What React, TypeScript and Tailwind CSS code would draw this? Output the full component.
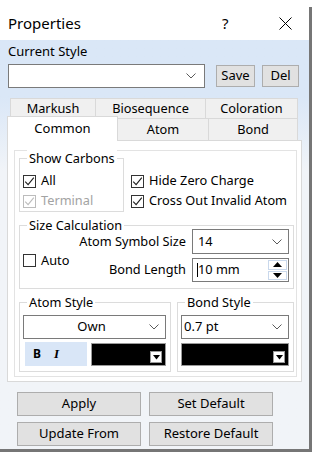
import React from 'react';

const Chevron: React.FC = () => (
  <svg width="10" height="6" viewBox="0 0 10 6">
    <path d="M0.5 0.5 L5 5 L9.5 0.5" fill="none" stroke="#5a5a5a" strokeWidth="1" />
  </svg>
);

const Check: React.FC<{ checked?: boolean; disabled?: boolean }> = ({ checked, disabled }) => (
  <span
    className={`w-[13px] h-[13px] shrink-0 border bg-white flex items-center justify-center ${
      disabled ? 'border-[#bcbcbc]' : 'border-[#333333]'
    }`}
  >
    {checked && (
      <svg width="11" height="11" viewBox="0 0 11 11">
        <path
          d="M1.2 5.6 L4.1 8.6 L9.8 1.6"
          fill="none"
          stroke={disabled ? '#bcbcbc' : '#1e1e1e'}
          strokeWidth="1.1"
        />
      </svg>
    )}
  </span>
);

const CheckRow: React.FC<{ label: string; checked?: boolean; disabled?: boolean }> = ({
  label,
  checked,
  disabled,
}) => (
  <div className="h-[20px] flex items-center gap-[5px]">
    <Check checked={checked} disabled={disabled} />
    <span className={disabled ? 'text-[#a3a3a3]' : 'text-black'}>{label}</span>
  </div>
);

const GroupBox: React.FC<{ title: string; className?: string; children?: React.ReactNode }> = ({
  title,
  className,
  children,
}) => (
  <div className={`relative border border-[#dcdcdc] ${className ?? ''}`}>
    <span className="absolute -top-[9px] left-[7px] bg-white px-[2px] leading-[16px]">{title}</span>
    {children}
  </div>
);

const ColorCombo: React.FC<{ className?: string }> = ({ className }) => (
  <div className={`border border-[#9a9a9a] bg-black flex items-end justify-end pr-[3px] pb-[2px] ${className ?? ''}`}>
    <div className="w-[12px] h-[12px] bg-white border border-[#9a9a9a] flex items-center justify-center">
      <svg width="7" height="5" viewBox="0 0 7 5">
        <path d="M0 0 H7 L3.5 4.5 Z" fill="#000" />
      </svg>
    </div>
  </div>
);

const Button: React.FC<{ label: string; className?: string }> = ({ label, className }) => (
  <div
    className={`bg-[#e1e1e1] border border-[#adadad] flex items-center justify-center text-black ${className ?? ''}`}
  >
    {label}
  </div>
);

const Tab: React.FC<{ label: string; className?: string }> = ({ label, className }) => (
  <div className={`bg-[#f0f0f0] border-[#d9d9d9] flex items-center justify-center ${className ?? ''}`}>
    {label}
  </div>
);

export default function App() {
  return (
    <div className="w-[319px] h-[459px] bg-white overflow-hidden font-['Noto_Sans','Open_Sans',sans-serif] text-[12.75px] text-black">
      <div className="mt-[7px] w-[312px] h-[445px] border-r-[3px] border-b-[3px] border-[#767676] flex flex-col">
        {/* title bar */}
        <div className="h-[33px] bg-white flex items-center">
          <span className="w-[221px] pl-[8px] text-[15px]">Properties</span>
          <span className="w-[58px] text-[15px] pl-[1px]">?</span>
          <svg width="13" height="13" viewBox="0 0 13 13">
            <path d="M0.5 0.5 L12.5 12.5 M12.5 0.5 L0.5 12.5" stroke="#000" strokeWidth="1" />
          </svg>
        </div>

        {/* body */}
        <div className="flex-1 flex flex-col bg-linear-to-b from-[#dae7f7] from-[14%] to-[#f1f4f8] to-[32%]">
          <div className="pl-[8px] pt-[3px] leading-[17px] text-[13px]">Current Style</div>
          <div className="mt-[4px] ml-[8px] flex items-center">
            <div className="w-[197px] h-[24px] bg-white border border-[#7a7a7a] flex items-center justify-end pr-[8px]">
              <Chevron />
            </div>
            <Button label="Save" className="ml-[11px] w-[39px] h-[22px] text-[13px]" />
            <Button label="Del" className="ml-[7px] w-[37px] h-[22px] text-[13px]" />
          </div>

          {/* tabs */}
          <div className="mt-[10px] ml-[7px] w-[295px]">
            <div className="ml-[3px] h-[20px] flex">
              <Tab label="Markush" className="w-[85px] border-l border-t" />
              <Tab label="Biosequence" className="w-[110px] border-l border-t" />
              <Tab label="Coloration" className="w-[93px] border-l border-t border-r" />
            </div>
            <div className="h-[22px] flex items-end">
              <div className="relative z-10 -mb-px w-[111px] h-[25px] bg-white border-l border-t border-r border-[#d9d9d9] flex items-center justify-center text-[13px]">
                Common
              </div>
              <Tab label="Atom" className="w-[91px] h-[22px] border-t border-r" />
              <Tab label="Bond" className="w-[89px] h-[22px] border-t border-r" />
            </div>

            {/* panel */}
            <div className="w-[295px] h-[242px] bg-white border border-[#d9d9d9]">
              <div className="mt-[9px] ml-[6px] w-[283px] h-[227px] border border-[#e3e3e3] pl-[4px]">
                <div className="mt-[7px] flex">
                  <GroupBox title="Show Carbons" className="w-[105px] h-[54px] pt-[12px] pl-[3px]">
                    <CheckRow label="All" checked />
                    <CheckRow label="Terminal" checked disabled />
                  </GroupBox>
                  <div className="ml-[7px] pt-[13px]">
                    <CheckRow label="Hide Zero Charge" checked />
                    <CheckRow label="Cross Out Invalid Atom" checked />
                  </div>
                </div>

                <GroupBox title="Size Calculation" className="mt-[13px] w-[275px] h-[64px] flex">
                  <div className="pl-[3px] pt-[28px]">
                    <div className="h-[13px] flex items-center gap-[5px]">
                      <Check />
                      <span>Auto</span>
                    </div>
                  </div>
                  <div className="ml-auto pr-[4px] pt-[3px] flex flex-col gap-[4px]">
                    <div className="flex items-center justify-end">
                      <span className="mr-[6px]">Atom Symbol Size</span>
                      <div className="w-[97px] h-[25px] border border-[#7a7a7a] bg-white flex items-center justify-between pl-[5px] pr-[6px]">
                        <span>14</span>
                        <Chevron />
                      </div>
                    </div>
                    <div className="flex items-center justify-end">
                      <span className="mr-[6px]">Bond Length</span>
                      <div className="w-[97px] h-[24px] border border-[#7a7a7a] bg-white flex items-center">
                        <span className="ml-[4px] w-px h-[14px] bg-black" />
                        <span className="flex-1">10 mm</span>
                        <div className="w-[20px] h-full flex flex-col py-px pr-px gap-px">
                          <div className="flex-1 border border-[#c9d8ec] flex items-center justify-center">
                            <svg width="9" height="5" viewBox="0 0 9 5">
                              <path d="M0 5 H9 L4.5 0 Z" fill="#000" />
                            </svg>
                          </div>
                          <div className="flex-1 border border-[#c9d8ec] flex items-center justify-center">
                            <svg width="9" height="5" viewBox="0 0 9 5">
                              <path d="M0 0 H9 L4.5 5 Z" fill="#000" />
                            </svg>
                          </div>
                        </div>
                      </div>
                    </div>
                  </div>
                </GroupBox>

                <div className="mt-[13px] flex gap-[6px]">
                  <GroupBox title="Atom Style" className="w-[152px] h-[70px] pt-[12px] pl-[3px]">
                    <div className="w-[143px] h-[24px] border border-[#7a7a7a] bg-white flex items-center pr-[6px]">
                      <span className="flex-1 text-center text-[13px] pl-[10px]">Own</span>
                      <Chevron />
                    </div>
                    <div className="mt-[3px] flex">
                      <div className="ml-[2px] w-[62px] h-[24px] bg-[#d9e6f7] flex items-center">
                        <span className="ml-[8px] font-bold text-[12px]">B</span>
                        <span className="ml-[13px] font-['Liberation_Serif',serif] italic font-bold text-[13px]">I</span>
                      </div>
                      <ColorCombo className="ml-[4px] w-[75px] h-[23px] mt-px" />
                    </div>
                  </GroupBox>
                  <GroupBox title="Bond Style" className="w-[117px] h-[70px] pt-[12px] pl-[3px]">
                    <div className="w-[108px] h-[24px] border border-[#7a7a7a] bg-white flex items-center justify-between pl-[2px] pr-[6px]">
                      <span className="text-[13px]">0.7 pt</span>
                      <Chevron />
                    </div>
                    <ColorCombo className="mt-[4px] w-[108px] h-[23px]" />
                  </GroupBox>
                </div>
              </div>
            </div>
          </div>

          {/* buttons */}
          <div className="mt-[10px] ml-[17px] grid grid-cols-[124px_124px] gap-x-[8px] gap-y-[6px] text-[13px]">
            <Button label="Apply" className="h-[24px]" />
            <Button label="Set Default" className="h-[24px]" />
            <Button label="Update From" className="h-[24px]" />
            <Button label="Restore Default" className="h-[24px]" />
          </div>
        </div>
      </div>
    </div>
  );
}
